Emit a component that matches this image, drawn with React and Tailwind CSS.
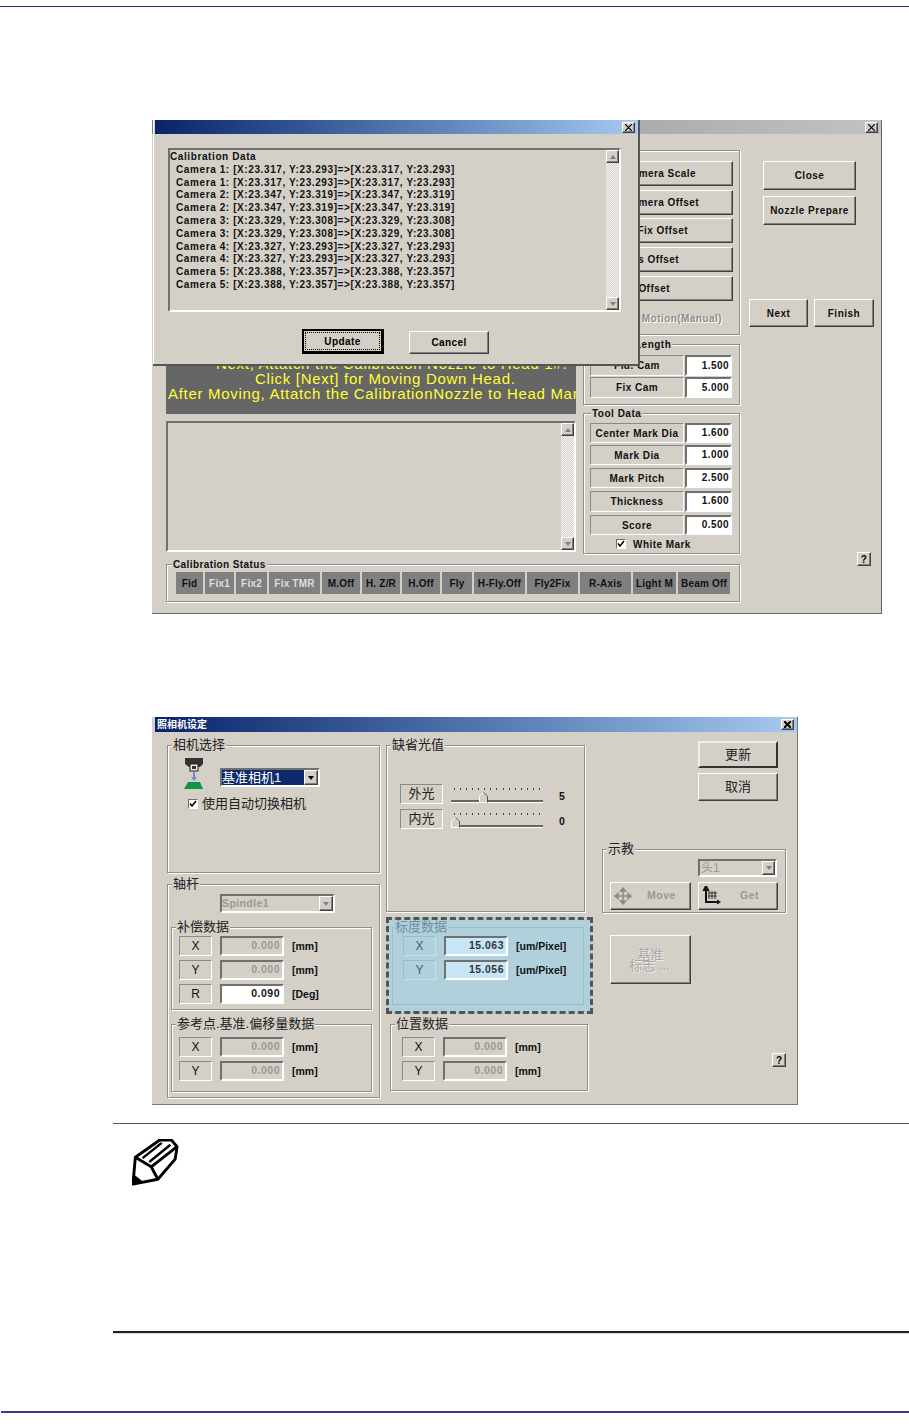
import React from 'react';

const raised = 'border border-t-white border-l-white border-b-[#404040] border-r-[#404040] shadow-[inset_-1px_-1px_0_#808080]';
const etched = 'border border-t-[#8a8a86] border-l-[#8a8a86] border-b-white border-r-white';
const sunken = 'border-2 border-t-[#707070] border-l-[#707070] border-b-white border-r-white';
const uiFont = "font-['Liberation_Sans',Arial,sans-serif]";
const cjkFont = "font-['Liberation_Sans','Noto_Sans_CJK_SC',sans-serif]";

const calLines = [
    '1: [X:23.317, Y:23.293]=>[X:23.317, Y:23.293]',
    '1: [X:23.317, Y:23.293]=>[X:23.317, Y:23.293]',
    '2: [X:23.347, Y:23.319]=>[X:23.347, Y:23.319]',
    '2: [X:23.347, Y:23.319]=>[X:23.347, Y:23.319]',
    '3: [X:23.329, Y:23.308]=>[X:23.329, Y:23.308]',
    '3: [X:23.329, Y:23.308]=>[X:23.329, Y:23.308]',
    '4: [X:23.327, Y:23.293]=>[X:23.327, Y:23.293]',
    '4: [X:23.327, Y:23.293]=>[X:23.327, Y:23.293]',
    '5: [X:23.388, Y:23.357]=>[X:23.388, Y:23.357]',
    '5: [X:23.388, Y:23.357]=>[X:23.388, Y:23.357]',
];

const statusButtons = [
    ['Fid', 'w-[27px]', 'text-[#111]'],
    ['Fix1', 'w-[29px]', 'text-[#ddd]'],
    ['Fix2', 'w-[31px]', 'text-[#ddd]'],
    ['Fix TMR', 'w-[51px]', 'text-[#ddd]'],
    ['M.Off', 'w-[38px]', 'text-[#111]'],
    ['H. Z/R', 'w-[38px]', 'text-[#111]'],
    ['H.Off', 'w-[38px]', 'text-[#111]'],
    ['Fly', 'w-[30px]', 'text-[#111]'],
    ['H-Fly.Off', 'w-[51px]', 'text-[#111]'],
    ['Fly2Fix', 'w-[51px]', 'text-[#111]'],
    ['R-Axis', 'w-[51px]', 'text-[#111]'],
    ['Light M', 'w-[43px]', 'text-[#111]'],
    ['Beam Off', 'w-[52px]', 'text-[#111]'],
];

const toolRows = [
    ['Center Mark Dia', '1.600', 'h-[20px]', 'mt-0'],
    ['Mark Dia', '1.000', 'h-[20px]', 'mt-[2px]'],
    ['Mark Pitch', '2.500', 'h-[20px]', 'mt-[3px]'],
    ['Thickness', '1.600', 'h-[21px]', 'mt-[3px]'],
    ['Score', '0.500', 'h-[20px]', 'mt-[3px]'],
];

const ticks = Array.from({ length: 15 });

const CloseBox = ({ bold }) => (
    <div className={`w-[13px] h-[11px] bg-[#d4d0c8] flex items-center justify-center ${raised}`}>
        <svg width="7" height="7" viewBox="0 0 7 7"><path d="M0 0 7 7M7 0 0 7" stroke="#000" strokeWidth={bold ? 2 : 1.2} /></svg>
    </div>
);

const ScrollBar = ({ className }) => (
    <div className={`flex flex-col w-[13px] bg-[repeating-conic-gradient(#d4d0c8_0_25%,#f4f4f2_0_50%)] bg-[length:2px_2px] ${className}`}>
        <div className={`h-[13px] bg-[#d4d0c8] flex items-center justify-center ${raised}`}>
            <div className="w-0 h-0 border-x-[3px] border-x-transparent border-b-[4px] border-b-[#808080]" />
        </div>
        <div className="flex-1" />
        <div className={`h-[13px] bg-[#d4d0c8] flex items-center justify-center ${raised}`}>
            <div className="w-0 h-0 border-x-[3px] border-x-transparent border-t-[4px] border-t-[#808080]" />
        </div>
    </div>
);

const Group = ({ title, className, titleClass = 'text-[#111] font-bold text-[10px] tracking-[0.5px] left-[7px] -top-[7px]', children }) => (
    <div className={`relative border border-[#8f8f8b] shadow-[1px_1px_0_#fff,inset_1px_1px_0_#fff] ${className}`}>
        {title && <span className={`absolute px-[1px] leading-[14px] bg-[#d4d0c8] whitespace-nowrap ${titleClass}`}>{title}</span>}
        {children}
    </div>
);

const Help = ({ className }) => (
    <div className={`w-[14px] h-[14px] flex items-center justify-center text-[10px] font-bold text-black bg-[#d4d0c8] ${raised} ${className}`}>?</div>
);

const CalibrationDialog = () => (
    <div className="absolute left-[1px] top-0 w-[487px] h-[246px] z-10 bg-[#d4d0c8] border-r-2 border-b-2 border-r-[#555] border-b-[#555] pl-[2px] shadow-[inset_1px_0_0_#fff]">
        <div className="h-[14px] flex items-center justify-end pr-[3px] bg-gradient-to-r from-[#0a246a] to-[#a6caf0]">
            <CloseBox />
        </div>
        <div className={`relative ml-[13px] mt-[14px] w-[453px] h-[164px] ${sunken}`}>
            <div className="pt-[1px] text-[10px] leading-[12.8px] font-bold tracking-[0.6px] text-[#111]">
                <div>Calibration Data</div>
                {calLines.map((l, i) => (
                    <div key={i} className="ml-[6px] whitespace-nowrap">Camera {l}</div>
                ))}
            </div>
            <ScrollBar className="absolute right-0 top-0 h-[160px]" />
        </div>
        <div className="flex items-end ml-[147px] mt-[17px] gap-[25px] tracking-[0.4px]">
            <button className="w-[82px] h-[25px] border-2 border-black border-r-[3px] border-b-[3px] bg-[#d4d0c8] p-[1px]">
                <span className="block w-full h-full border border-dotted border-black text-[10px] font-bold leading-[17px] text-black">Update</span>
            </button>
            <button className={`w-[80px] h-[23px] bg-[#d4d0c8] text-[10px] font-bold text-black ${raised}`}>Cancel</button>
        </div>
    </div>
);

const CalibrationWindow = () => (
    <div className={`relative ml-[152px] mt-[113px] w-[730px] h-[494px] bg-[#d4d0c8] border-r border-b border-r-[#666] border-b-[#666] ${uiFont}`}>
        <div className="h-[14px] flex items-center justify-end pr-[3px] bg-gradient-to-r from-[#808080] to-[#c2c2c2]">
            <CloseBox />
        </div>
        <CalibrationDialog />
        <div className="flex h-[420px] pl-[14px] pt-[16px]">
            <div className="flex flex-col w-[410px] pt-[190px]">
                <div className="h-[74px] bg-[#666] overflow-hidden text-[15px] leading-[15px] tracking-[0.7px] text-[#ffff33] whitespace-nowrap">
                    <div className="mt-[16px] pl-[50px]">Next, Attatch the Calibration Nozzle to Head 1#.</div>
                    <div className="pl-[89px]">Click [Next] for Moving Down Head.</div>
                    <div className="pl-[2px]">After Moving, Attatch the CalibrationNozzle to Head Man</div>
                </div>
                <div className={`relative mt-[7px] h-[131px] ${sunken}`}>
                    <ScrollBar className="absolute right-0 top-0 h-[127px]" />
                </div>
            </div>
            <div className="flex flex-col ml-[7px] w-[157px] text-[10px] font-bold tracking-[0.45px] text-[#111]">
                <Group className="h-[185px] pl-[6px] pt-[10px]">
                    {[['Camera Scale', 'pr-[36px]', 'mt-0'], ['Camera Offset', 'pr-[33px]', 'mt-[4px]'], ['H. Fix Offset', 'pr-[44px]', 'mt-[3px]'], ['Axis Offset', 'pr-[53px]', 'mt-[4px]'], ['H. Offset', 'pr-[62px]', 'mt-[4px]']].map(([t, pr, mt]) => (
                        <div key={t} className={`w-[143px] h-[25px] flex items-center justify-end pb-[1px] ${pr} ${mt} ${raised}`}>{t}</div>
                    ))}
                    <div className="w-[132px] mt-[10px] text-right text-[#8c8c8c] [text-shadow:1px_1px_0_#fff]">Nozzle Motion(Manual)</div>
                </Group>
                <Group title="Camera Length" className="h-[61px] mt-[9px] pl-[6px] pt-[10px]">
                    {[['Fid. Cam', '1.500'], ['Fix Cam', '5.000']].map(([l, v], i) => (
                        <div key={l} className={`flex h-[21px] ${i ? 'mt-[1px]' : ''}`}>
                            <div className={`w-[94px] flex items-center justify-center ${etched}`}>{l}</div>
                            <div className={`w-[47px] ml-[1px] bg-white text-right pr-[1px] leading-[17px] ${sunken}`}>{v}</div>
                        </div>
                    ))}
                </Group>
                <Group title="Tool Data" className="h-[141px] mt-[8px] pl-[6px] pt-[9px]">
                    {toolRows.map(([l, v, h, mt]) => (
                        <div key={l} className={`flex ${h} ${mt}`}>
                            <div className={`w-[94px] flex items-center justify-center ${etched}`}>{l}</div>
                            <div className={`w-[47px] ml-[1px] bg-white text-right pr-[1px] leading-[16px] ${sunken}`}>{v}</div>
                        </div>
                    ))}
                    <div className="flex items-center ml-[26px] mt-[2px] h-[14px]">
                        <div className="w-[10px] h-[10px] bg-white border border-t-[#707070] border-l-[#707070] border-b-white border-r-white flex items-center justify-center">
                            <svg width="8" height="8" viewBox="0 0 8 8"><path d="M1 3.5 3 6 7 1" fill="none" stroke="#000" strokeWidth="1.5" /></svg>
                        </div>
                        <span className="ml-[7px]">White Mark</span>
                    </div>
                </Group>
            </div>
            <div className="ml-[9px] w-[125px] text-[10px] font-bold tracking-[0.5px] text-[#111]">
                <div className={`ml-[14px] mt-[11px] w-[93px] h-[29px] flex items-center justify-center ${raised}`}>Close</div>
                <div className={`ml-[14px] mt-[6px] w-[93px] h-[29px] flex items-center justify-center ${raised}`}>Nozzle Prepare</div>
                <div className="flex gap-[6px] mt-[74px]">
                    <div className={`w-[59px] h-[28px] flex items-center justify-center ${raised}`}>Next</div>
                    <div className={`w-[60px] h-[28px] flex items-center justify-center ${raised}`}>Finish</div>
                </div>
                <Help className="ml-[108px] mt-[225px]" />
            </div>
        </div>
        <Group title="Calibration Status" titleClass="text-[#111] font-bold text-[10px] tracking-[0.4px] left-[5px] -top-[7px]" className="ml-[14px] mt-[10px] w-[574px] h-[38px] pl-[9px] pt-[7px]">
            <div className="flex gap-[2px]">
                {statusButtons.map(([t, w, c]) => (
                    <div key={t} className={`h-[22px] flex items-center justify-center bg-[#808080] text-[10px] font-bold tracking-[0.2px] whitespace-nowrap ${w} ${c}`}>{t}</div>
                ))}
            </div>
        </Group>
    </div>
);

const ValueRow = ({ label, value, unit, tone = 'gray', className = '' }) => {
    const blue = tone === 'blue';
    return (
        <div className={`flex h-[20px] ${className}`}>
            <div className={`w-[33px] flex items-center justify-center text-[12px] ${blue ? 'text-[#45606c] border border-[#9cbcc8] border-b-[#c8e0ea] border-r-[#c8e0ea]' : `text-[#111] ${etched}`}`}>{label}</div>
            <div className={`ml-[8px] w-[64px] text-right pr-[2px] text-[10.5px] font-bold tracking-[0.5px] leading-[15px] border-2 border-t-[#707070] border-l-[#707070] border-b-white border-r-white ${
                tone === 'white' ? 'bg-white text-[#111]' : blue ? 'bg-[#c6e6f6] text-[#333] border-b-[#c8e0ea] border-r-[#c8e0ea]' : 'bg-[#d4d0c8] text-[#9a9a96]'}`}>{value}</div>
            <div className="ml-[8px] text-[10.5px] font-bold text-[#111] leading-[20px] whitespace-nowrap">{unit}</div>
        </div>
    );
};

const Slider = ({ label, value, thumbClass, className }) => (
    <div className={`flex h-[20px] ${className}`}>
        <div className={`w-[43px] flex items-center justify-center text-[13px] text-[#222] ${etched}`}>{label}</div>
        <div className="relative ml-[8px] w-[92px]">
            <div className="absolute left-[3px] right-[3px] top-[4px] flex justify-between">
                {ticks.map((_, i) => <div key={i} className="w-px h-[2px] bg-[#444]" />)}
            </div>
            <div className="absolute left-0 right-0 top-[16px] h-[2px] bg-[#666] shadow-[0_1px_0_#fff]" />
            <svg className={`absolute top-[8px] ${thumbClass}`} width="9" height="11" viewBox="0 0 9 11">
                <path d="M.5 10.5V4L4.5.5 8.5 4v6.5z" fill="#d4d0c8" stroke="#fff" />
                <path d="M4.5.5 8.5 4v6.5" fill="none" stroke="#555" />
            </svg>
        </div>
        <div className="ml-[16px] mt-[2px] text-[10.5px] font-bold text-[#111] leading-[20px]">{value}</div>
    </div>
);

const cjkTitle = 'text-[13px] text-[#222] font-normal left-[4px] -top-[8px]';

const CameraWindow = () => (
    <div className={`ml-[152px] mt-[103px] w-[646px] h-[388px] bg-[#d4d0c8] border-r border-b border-r-[#777] border-b-[#777] pt-0 ${cjkFont}`}>
        <div className="ml-[3px] h-[15px] flex items-center justify-between pl-[2px] pr-[3px] bg-gradient-to-r from-[#0a246a] to-[#a6caf0]">
            <span className="text-[10px] font-bold text-white leading-none">照相机设定</span>
            <CloseBox bold />
        </div>
        <div className="flex pl-[15px]">
            <div className="w-[213px] pt-[13px]">
                <Group title="相机选择" titleClass={cjkTitle} className="h-[128px]">
                    <div className="flex">
                        <svg className="ml-[16px] mt-[12px]" width="20" height="32" viewBox="0 0 20 32">
                            <path d="M1 0h18v6l-3 3H5L1 6z" fill="#333" />
                            <rect x="6" y="6" width="8" height="7" fill="#e8e8e8" stroke="#222" />
                            <rect x="8" y="8" width="4" height="3" fill="#333" />
                            <path d="M9 14h2v5h2l-3 4-3-4h2z" fill="#7b86d8" />
                            <path d="M4 24h12l3 7H0z" fill="#119447" />
                        </svg>
                        <div className={`ml-[16px] mt-[22px] w-[100px] h-[19px] flex items-stretch bg-white ${sunken}`}>
                            <div className="flex-1 bg-[#0e2a6a] text-white text-[13px] leading-[15px] whitespace-nowrap overflow-hidden">基准相机1</div>
                            <div className={`w-[14px] bg-[#d4d0c8] flex items-center justify-center ${raised}`}>
                                <div className="w-0 h-0 border-x-[3px] border-x-transparent border-t-[4px] border-t-black" />
                            </div>
                        </div>
                    </div>
                    <div className="flex items-center ml-[20px] mt-[5px]">
                        <div className="w-[10px] h-[10px] bg-white border border-t-[#707070] border-l-[#707070] border-b-white border-r-white flex items-center justify-center">
                            <svg width="8" height="8" viewBox="0 0 8 8"><path d="M1 3.5 3 6 7 1" fill="none" stroke="#000" strokeWidth="1.5" /></svg>
                        </div>
                        <span className="ml-[4px] text-[13px] leading-[18px] text-[#222] whitespace-nowrap">使用自动切换相机</span>
                    </div>
                </Group>
                <Group title="轴杆" titleClass={cjkTitle} className="h-[214px] mt-[11px] pl-[3px] pr-[7px]">
                    <div className={`ml-[49px] mt-[9px] w-[115px] h-[19px] flex ${sunken}`}>
                        <div className="flex-1 text-[10.5px] font-bold tracking-[0.4px] text-[#9a9a96] leading-[15px]">Spindle1</div>
                        <div className={`w-[14px] flex items-center justify-center ${raised}`}>
                            <div className="w-0 h-0 border-x-[3px] border-x-transparent border-t-[4px] border-t-[#808080]" />
                        </div>
                    </div>
                    <Group title="补偿数据" titleClass={cjkTitle} className="h-[83px] mt-[14px] pl-[7px] pt-[8px]">
                        <ValueRow label="X" value="0.000" unit="[mm]" />
                        <ValueRow label="Y" value="0.000" unit="[mm]" className="mt-[4px]" />
                        <ValueRow label="R" value="0.090" unit="[Deg]" tone="white" className="mt-[4px]" />
                    </Group>
                    <Group title="参考点.基准.偏移量数据" titleClass={cjkTitle} className="h-[68px] mt-[14px] pl-[7px] pt-[12px]">
                        <ValueRow label="X" value="0.000" unit="[mm]" />
                        <ValueRow label="Y" value="0.000" unit="[mm]" className="mt-[4px]" />
                    </Group>
                </Group>
            </div>
            <div className="ml-[6px] w-[207px] pt-[13px]">
                <Group title="缺省光值" titleClass={cjkTitle} className="w-[199px] h-[167px] pl-[13px] pt-[38px]">
                    <Slider label="外光" value="5" thumbClass="left-[28px]" />
                    <Slider label="内光" value="0" thumbClass="left-0" className="mt-[5px]" />
                </Group>
                <div className="mt-[5px] h-[97px] bg-[#b0d0dc] border-[3px] border-dashed border-[#555] pt-[7px] pl-[3px]">
                    <div className="relative h-[78px] w-[192px] border border-[#9cbcc8] pl-[10px] pt-[8px]">
                        <span className="absolute -top-[8px] left-[1px] text-[13px] leading-[14px] text-[#6f8f9c] bg-[#b0d0dc] px-[1px]">标度数据</span>
                        <ValueRow label="X" value="15.063" unit="[um/Pixel]" tone="blue" />
                        <ValueRow label="Y" value="15.056" unit="[um/Pixel]" tone="blue" className="mt-[4px]" />
                    </div>
                </div>
                <Group title="位置数据" titleClass={cjkTitle} className="ml-[4px] mt-[10px] w-[198px] h-[67px] pl-[11px] pt-[12px]">
                    <ValueRow label="X" value="0.000" unit="[mm]" />
                    <ValueRow label="Y" value="0.000" unit="[mm]" className="mt-[4px]" />
                </Group>
            </div>
            <div className="ml-[9px] w-[184px]">
                <div className="ml-[96px] mt-[9px] w-[80px] h-[27px] flex items-center justify-center text-[13px] text-[#222] border-2 border-t-[#eee] border-l-[#eee] border-b-[#333] border-r-[#333]">更新</div>
                <div className={`ml-[96px] mt-[5px] w-[80px] h-[28px] flex items-center justify-center text-[13px] text-[#222] ${raised}`}>取消</div>
                <Group title="示教" titleClass={cjkTitle} className="h-[64px] mt-[48px]">
                    <div className={`ml-[95px] mt-[9px] w-[79px] h-[18px] flex ${sunken}`}>
                        <div className="flex-1 text-[12px] text-[#9a9a96] leading-[14px] pl-[1px]">头1</div>
                        <div className={`w-[13px] flex items-center justify-center ${raised}`}>
                            <div className="w-0 h-0 border-x-[3px] border-x-transparent border-t-[4px] border-t-[#808080]" />
                        </div>
                    </div>
                    <div className="flex ml-[7px] mt-[5px] gap-[7px] text-[10.5px] font-bold tracking-[0.5px]">
                        <div className={`w-[81px] h-[28px] flex items-center text-[#999] ${raised}`}>
                            <svg className="ml-[3px]" width="18" height="18" viewBox="0 0 18 18">
                                <path d="M9 1v16M1 9h16M9 1 6.5 4h5zM9 17l-2.5-3h5zM1 9l3-2.5v5zM17 9l-3-2.5v5z" fill="#8c8c88" stroke="#8c8c88" strokeWidth="1.5" />
                            </svg>
                            <span className="ml-[15px]">Move</span>
                        </div>
                        <div className={`w-[80px] h-[28px] flex items-center text-[#999] ${raised}`}>
                            <svg className="ml-[3px]" width="20" height="20" viewBox="0 0 20 20">
                                <path d="M4 0 2 4h4zM4 3v13h12" fill="none" stroke="#111" strokeWidth="2" />
                                <path d="M15 13.5 19 16l-4 2.5z" fill="#111" />
                                <path d="M7 5v8M10 5v8M13 5v8M6 7h9M6 10h9" stroke="#333" strokeWidth="1" />
                            </svg>
                            <span className="ml-[18px]">Get</span>
                        </div>
                    </div>
                </Group>
                <div className={`ml-[8px] mt-[22px] w-[81px] h-[49px] flex flex-col items-center justify-center text-[13px] leading-[11px] text-[#a8a8a4] [text-shadow:1px_1px_0_#eee] ${raised}`}>
                    <span>基准</span>
                    <span className="mr-[2px]">标志 ...</span>
                </div>
                <Help className="ml-[170px] mt-[69px]" />
            </div>
        </div>
    </div>
);

const App = () => (
    <div className="w-[909px] h-[1424px] bg-white overflow-hidden">
        <div className="pt-[6px]"><div className="h-px bg-[#2f2f7f]" /></div>
        <CalibrationWindow />
        <CameraWindow />
        <div className="ml-[113px] mt-[18px] h-[210px] border-t border-b-2 border-t-[#555] border-b-[#222] shadow-[0_1px_0_#ddd]">
            <svg className="ml-[19px] mt-[15px]" width="47" height="47" viewBox="0 0 49 49">
                <path d="M1 47 3.5 19 29 1h12l6 7-2 13-18 21z" fill="#fff" stroke="#000" strokeWidth="3" strokeLinejoin="round" />
                <path d="M3.5 19 20 29l7 13M20 29 47 8" fill="none" stroke="#000" strokeWidth="3" />
                <path d="M11 20 31 4M18 24 40 6" fill="none" stroke="#000" strokeWidth="2.5" />
                <path d="M1 48 2 37l9 7z" fill="#000" />
            </svg>
        </div>
        <div className="mt-[78px] ml-px h-[2px] bg-[#3a3a90]" />
    </div>
);

export default App;
